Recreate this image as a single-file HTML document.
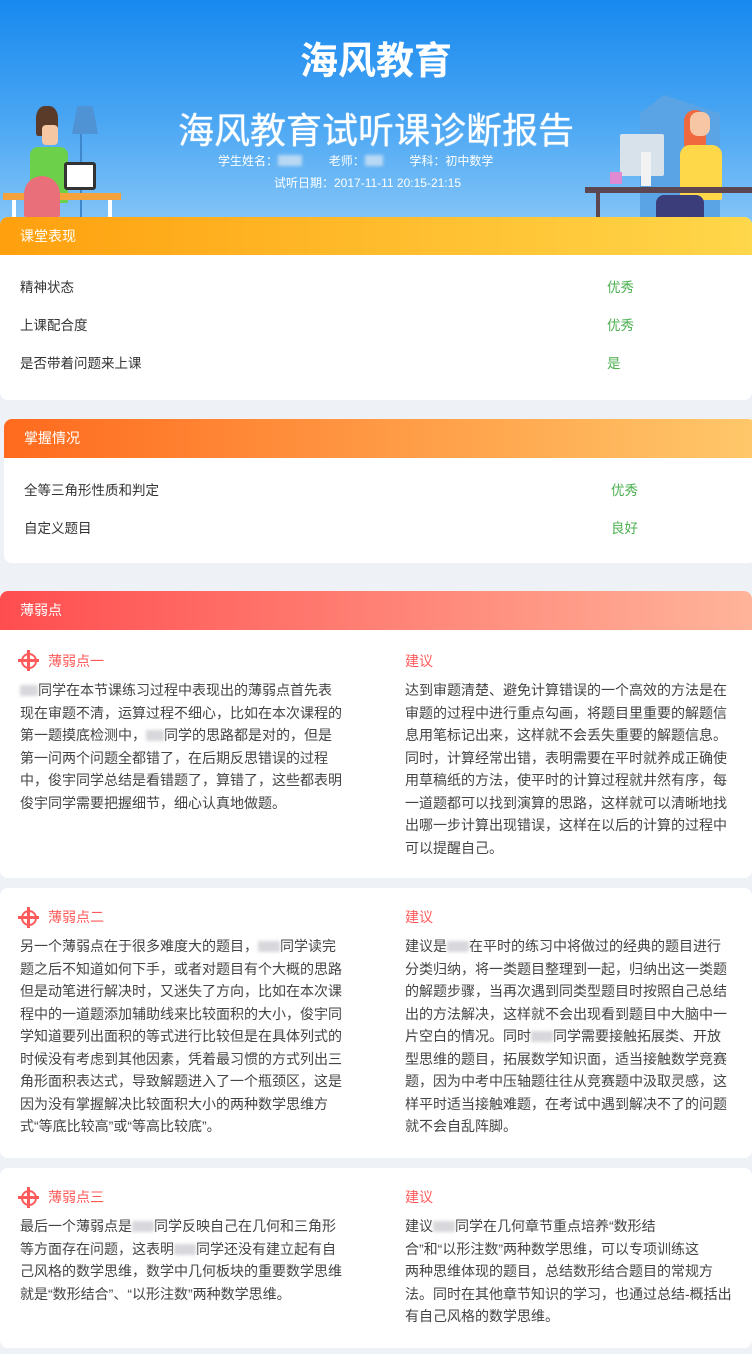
<!DOCTYPE html>
<html><head><meta charset="utf-8"><style>
*{margin:0;padding:0;box-sizing:border-box}
body{width:752px;height:1354px;background:#eef2f6;font-family:"Liberation Sans","Noto Sans CJK SC",sans-serif;position:relative;overflow:hidden;color:#444}
.abs{position:absolute}
.banner{left:0;top:0;width:752px;height:240px;background:linear-gradient(180deg,#1789ef 0%,#4aa6f3 50%,#8ecaf8 100%)}
.card{position:absolute;background:#fff;border-radius:8px;overflow:hidden}
.hd{height:38px;line-height:38px;color:#fff;font-size:14px;padding-left:20px}
.row{position:absolute;font-size:13.5px;color:#333}
.g{color:#4cb050}
.t{position:absolute;font-size:14px;color:#ff5a5a;line-height:20px}
.p{position:absolute;font-size:14px;line-height:22.5px;color:#444;white-space:nowrap}
.b{display:inline-block;width:26px;height:11px;background:#d8d8dc;filter:blur(1.5px);vertical-align:-1px}
.ic{position:absolute;width:16px;height:16px;border:2.5px solid #ff5a5a;border-radius:50%}
.ic:before{content:"";position:absolute;left:4px;top:-5px;width:3px;height:21px;background:#ff5a5a}
.ic:after{content:"";position:absolute;top:4px;left:-5px;height:3px;width:21px;background:#ff5a5a}
</style></head><body>
<div class="abs banner"></div>
<div class="abs" style="left:80px;top:108px;width:2px;height:110px;background:#3f87cc"></div>
<div class="abs" style="left:72px;top:106px;width:26px;height:28px;background:#4f93d4;clip-path:polygon(20% 0,80% 0,100% 100%,0 100%)"></div>
<div class="abs" style="left:36px;top:106px;width:22px;height:30px;background:#5a3b2a;border-radius:40% 40% 10% 10%"></div>
<div class="abs" style="left:42px;top:125px;width:16px;height:20px;background:#f5c7a3;border-radius:4px"></div>
<div class="abs" style="left:30px;top:147px;width:38px;height:56px;background:#6cd04a;border-radius:8px 8px 2px 2px"></div>
<div class="abs" style="left:60px;top:175px;width:30px;height:10px;background:#6cd04a;border-radius:4px"></div>
<div class="abs" style="left:64px;top:162px;width:32px;height:28px;background:#fff;border:3px solid #333;border-radius:3px"></div>
<div class="abs" style="left:3px;top:193px;width:118px;height:7px;background:#f4a23b"></div>
<div class="abs" style="left:12px;top:200px;width:4px;height:17px;background:#fff"></div>
<div class="abs" style="left:108px;top:200px;width:4px;height:17px;background:#fff"></div>
<div class="abs" style="left:24px;top:176px;width:36px;height:41px;background:#e9707a;border-radius:18px 18px 2px 2px"></div>
<div class="abs" style="left:640px;top:95px;width:80px;height:122px;background:#5aa4e6;clip-path:polygon(30% 0,100% 15%,100% 100%,0 100%,0 15%)"></div>
<div class="abs" style="left:684px;top:110px;width:22px;height:44px;background:#f0683e;border-radius:11px"></div>
<div class="abs" style="left:690px;top:112px;width:20px;height:24px;background:#f7c7a5;border-radius:8px"></div>
<div class="abs" style="left:680px;top:145px;width:42px;height:55px;background:#ffd84a;border-radius:10px 10px 2px 2px"></div>
<div class="abs" style="left:620px;top:134px;width:44px;height:42px;background:#d8e2ea;border-radius:2px"></div>
<div class="abs" style="left:641px;top:152px;width:10px;height:34px;background:#f2f2f2"></div>
<div class="abs" style="left:610px;top:172px;width:12px;height:12px;background:#e08ad2"></div>
<div class="abs" style="left:585px;top:187px;width:167px;height:6px;background:#5b4652"></div>
<div class="abs" style="left:596px;top:193px;width:4px;height:24px;background:#5b4652"></div>
<div class="abs" style="left:656px;top:195px;width:48px;height:22px;background:#3a3d7a;border-radius:8px 8px 0 0"></div>
<div class="abs" style="left:0;top:30px;width:752px;text-align:center;color:#fff;font-size:38px;font-weight:bold;letter-spacing:0px">海风教育</div>
<div class="abs" style="left:0;top:102px;width:752px;text-align:center;color:#fff;font-size:36px;font-weight:normal;text-shadow:0 0 1px #fff">海风教育试听课诊断报告</div>
<div class="abs" style="left:218px;top:152px;color:#fff;font-size:12px;white-space:nowrap">学生姓名：<span class="b" style="width:24px;background:#b8d8f4"></span>&nbsp;&nbsp;&nbsp;&nbsp;&nbsp;&nbsp;&nbsp;&nbsp;老师：<span class="b" style="width:18px;background:#b8d8f4"></span>&nbsp;&nbsp;&nbsp;&nbsp;&nbsp;&nbsp;&nbsp;&nbsp;学科：初中数学</div>
<div class="abs" style="left:274px;top:174px;color:#fff;font-size:12px;white-space:nowrap">试听日期：2017-11-11 20:15-21:15</div>

<div class="card" style="left:0;top:217px;width:752px;height:183px">
<div class="hd" style="background:linear-gradient(90deg,#ffa00e,#ffd74a)">课堂表现</div>
<div class="row" style="left:20px;top:59px">精神状态</div><div class="row g" style="left:607px;top:59px">优秀</div>
<div class="row" style="left:20px;top:97px">上课配合度</div><div class="row g" style="left:607px;top:97px">优秀</div>
<div class="row" style="left:20px;top:135px">是否带着问题来上课</div><div class="row g" style="left:607px;top:135px">是</div>
</div>

<div class="card" style="left:4px;top:419px;width:752px;height:144px">
<div class="hd" style="background:linear-gradient(90deg,#ff6a1e,#ffc86a);height:39px;line-height:39px">掌握情况</div>
<div class="row" style="left:20px;top:60px">全等三角形性质和判定</div><div class="row g" style="left:607px;top:60px">优秀</div>
<div class="row" style="left:20px;top:98px">自定义题目</div><div class="row g" style="left:607px;top:98px">良好</div>
</div>

<div class="card" style="left:0;top:591px;width:752px;height:287px">
<div class="hd" style="background:linear-gradient(90deg,#ff4d4f,#ffb49a);height:39px;line-height:39px">薄弱点</div>
<div class="ic" style="left:21px;top:62px"></div>
<div class="t" style="left:48px;top:60px">薄弱点一</div>
<div class="t" style="left:405px;top:60px">建议</div>
<div class="p" style="left:20px;top:88px"><span class="b" style="width:18px"></span>同学在本节课练习过程中表现出的薄弱点首先表<br>现在审题不清，运算过程不细心，比如在本次课程的<br>第一题摸底检测中，<span class="b" style="width:18px"></span>同学的思路都是对的，但是<br>第一问两个问题全都错了，在后期反思错误的过程<br>中，俊宇同学总结是看错题了，算错了，这些都表明<br>俊宇同学需要把握细节，细心认真地做题。</div>
<div class="p" style="left:405px;top:88px">达到审题清楚、避免计算错误的一个高效的方法是在<br>审题的过程中进行重点勾画，将题目里重要的解题信<br>息用笔标记出来，这样就不会丢失重要的解题信息。<br>同时，计算经常出错，表明需要在平时就养成正确使<br>用草稿纸的方法，使平时的计算过程就井然有序，每<br>一道题都可以找到演算的思路，这样就可以清晰地找<br>出哪一步计算出现错误，这样在以后的计算的过程中<br>可以提醒自己。</div>
</div>

<div class="card" style="left:0;top:888px;width:752px;height:270px">
<div class="ic" style="left:21px;top:22px"></div>
<div class="t" style="left:48px;top:19px">薄弱点二</div>
<div class="t" style="left:405px;top:19px">建议</div>
<div class="p" style="left:20px;top:47px">另一个薄弱点在于很多难度大的题目，<span class="b" style="width:22px"></span>同学读完<br>题之后不知道如何下手，或者对题目有个大概的思路<br>但是动笔进行解决时，又迷失了方向，比如在本次课<br>程中的一道题添加辅助线来比较面积的大小，俊宇同<br>学知道要列出面积的等式进行比较但是在具体列式的<br>时候没有考虑到其他因素，凭着最习惯的方式列出三<br>角形面积表达式，导致解题进入了一个瓶颈区，这是<br>因为没有掌握解决比较面积大小的两种数学思维方<br>式“等底比较高”或“等高比较底”。</div>
<div class="p" style="left:405px;top:47px">建议是<span class="b" style="width:22px"></span>在平时的练习中将做过的经典的题目进行<br>分类归纳，将一类题目整理到一起，归纳出这一类题<br>的解题步骤，当再次遇到同类型题目时按照自己总结<br>出的方法解决，这样就不会出现看到题目中大脑中一<br>片空白的情况。同时<span class="b" style="width:22px"></span>同学需要接触拓展类、开放<br>型思维的题目，拓展数学知识面，适当接触数学竞赛<br>题，因为中考中压轴题往往从竞赛题中汲取灵感，这<br>样平时适当接触难题，在考试中遇到解决不了的问题<br>就不会自乱阵脚。</div>
</div>

<div class="card" style="left:0;top:1168px;width:752px;height:180px">
<div class="ic" style="left:21px;top:22px"></div>
<div class="t" style="left:48px;top:19px">薄弱点三</div>
<div class="t" style="left:405px;top:19px">建议</div>
<div class="p" style="left:20px;top:47px">最后一个薄弱点是<span class="b" style="width:22px"></span>同学反映自己在几何和三角形<br>等方面存在问题，这表明<span class="b" style="width:22px"></span>同学还没有建立起有自<br>己风格的数学思维，数学中几何板块的重要数学思维<br>就是“数形结合”、“以形注数”两种数学思维。</div>
<div class="p" style="left:405px;top:47px">建议<span class="b" style="width:22px"></span>同学在几何章节重点培养“数形结<br>合”和“以形注数”两种数学思维，可以专项训练这<br>两种思维体现的题目，总结数形结合题目的常规方<br>法。同时在其他章节知识的学习，也通过总结-概括出<br>有自己风格的数学思维。</div>
</div>
</body></html>
